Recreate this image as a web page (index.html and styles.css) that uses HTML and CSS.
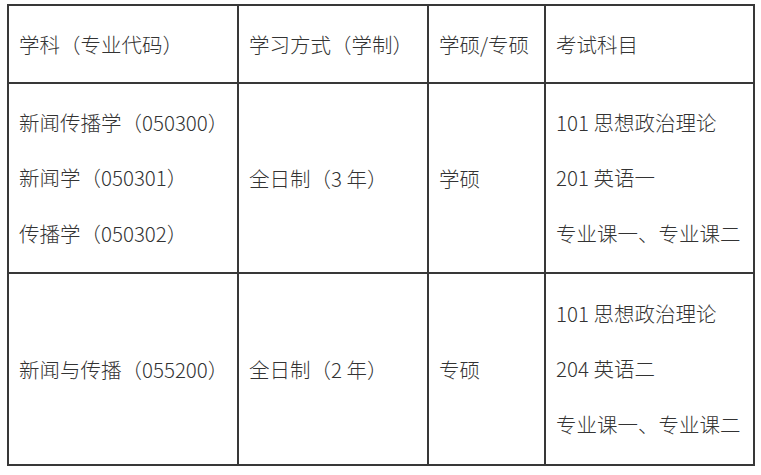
FILE: index.html
```html
<!DOCTYPE html>
<html lang="zh-CN">
<head>
<meta charset="utf-8">
<title>招生专业</title>
<link rel="stylesheet" href="styles.css">
</head>
<body>
<div class="page">
  <div class="grid">
    <div class="cell">学科（专业代码）</div>
    <div class="cell">学习方式（学制）</div>
    <div class="cell">学硕/专硕</div>
    <div class="cell">考试科目</div>

    <div class="cell lines">
      <div class="line">新闻传播学（050300）</div>
      <div class="line">新闻学（050301）</div>
      <div class="line">传播学（050302）</div>
    </div>
    <div class="cell">全日制（3 年）</div>
    <div class="cell">学硕</div>
    <div class="cell lines">
      <div class="line">101 思想政治理论</div>
      <div class="line">201 英语一</div>
      <div class="line">专业课一、专业课二</div>
    </div>

    <div class="cell">新闻与传播（055200）</div>
    <div class="cell">全日制（2 年）</div>
    <div class="cell">专硕</div>
    <div class="cell lines">
      <div class="line">101 思想政治理论</div>
      <div class="line">204 英语二</div>
      <div class="line">专业课一、专业课二</div>
    </div>
  </div>
</div>
</body>
</html>
```

FILE: styles.css
```css
html, body {
  margin: 0;
  padding: 0;
  background: #ffffff;
}

.page {
  padding: 4px 0 0 7px;
  font-family: "Noto Sans CJK SC", "Noto Sans", sans-serif;
  font-size: 20.5px;
  font-weight: 300;
  color: #333333;
}

.grid {
  display: grid;
  width: max-content;
  grid-template-columns: 228px 188px 115px 207px;
  grid-template-rows: 76px 188px 190px;
  gap: 2px;
  padding: 2px;
  background: #383838;
}

.cell {
  background: #ffffff;
  display: flex;
  flex-direction: column;
  justify-content: center;
  padding-left: 10px;
  white-space: nowrap;
  line-height: 28px;
}

.lines .line {
  line-height: 55.5px;
}
```
